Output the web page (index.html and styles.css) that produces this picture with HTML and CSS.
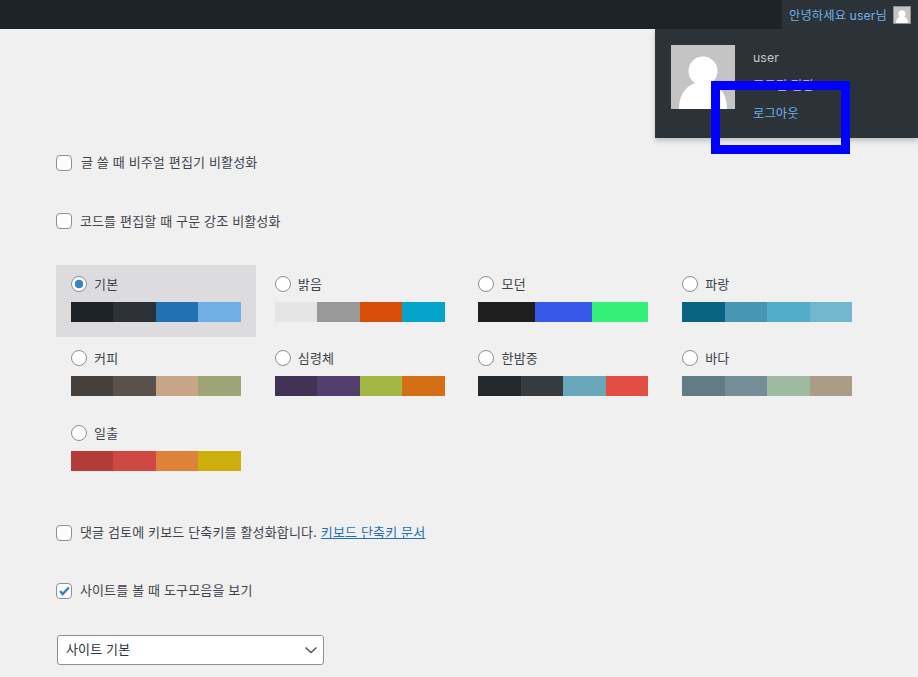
FILE: index.html
```html
<!DOCTYPE html>
<html lang="ko">
<head>
  <meta charset="UTF-8">
  <meta name="viewport" content="width=device-width, initial-scale=1.0">
  <title>프로필</title>
  <link rel="stylesheet" href="styles.css">
</head>
<body>
  <!-- Admin bar -->
  <div class="adminbar">
    <a href="#" class="account">
      <span>안녕하세요 user님</span>
      <svg class="avatar-small" viewBox="0 0 64 64"><rect width="64" height="64" fill="#c4c4c4"/><circle cx="32" cy="27" r="14.5" fill="#fff"/><path d="M8 64c0-17 10-27 24-27s24 10 24 27z" fill="#fff"/></svg>
    </a>
    <div class="account-menu">
      <svg class="avatar-large" viewBox="0 0 64 64"><rect width="64" height="64" fill="#c4c4c4"/><circle cx="32" cy="26" r="14.5" fill="#fff"/><path d="M8 64c0-17 10-27 24-27s24 10 24 27z" fill="#fff"/></svg>
      <div class="account-links">
        <a href="#">user</a>
        <a href="#">프로필 편집</a>
        <a href="#" class="logout">로그아웃</a>
      </div>
    </div>
    <div class="highlight"></div>
  </div>

  <!-- Profile form -->
  <div class="content">
    <label class="check-row first">
      <input type="checkbox">
      <span class="gap-wide">글 쓸 때 비주얼 편집기 비활성화</span>
    </label>
    <label class="check-row code-row">
      <input type="checkbox">
      <span>코드를 편집할 때 구문 강조 비활성화</span>
    </label>

    <div class="schemes">
      <div class="scheme selected">
        <label><input type="radio" name="scheme" checked>기본</label>
        <div class="swatches"><i style="background:#1d2327"></i><i style="background:#2c3338"></i><i style="background:#2271b1"></i><i style="background:#72aee6"></i></div>
      </div>
      <div class="scheme">
        <label><input type="radio" name="scheme">밝음</label>
        <div class="swatches"><i style="background:#e5e5e5"></i><i style="background:#999"></i><i style="background:#d64e07"></i><i style="background:#04a4cc"></i></div>
      </div>
      <div class="scheme">
        <label><input type="radio" name="scheme">모던</label>
        <div class="swatches"><i style="background:#1e1e1e"></i><i style="background:#3858e9"></i><i style="background:#33f078"></i></div>
      </div>
      <div class="scheme">
        <label><input type="radio" name="scheme">파랑</label>
        <div class="swatches"><i style="background:#096484"></i><i style="background:#4796b3"></i><i style="background:#52accc"></i><i style="background:#74b6ce"></i></div>
      </div>
      <div class="scheme">
        <label><input type="radio" name="scheme">커피</label>
        <div class="swatches"><i style="background:#46403c"></i><i style="background:#59524c"></i><i style="background:#c7a589"></i><i style="background:#9ea476"></i></div>
      </div>
      <div class="scheme">
        <label><input type="radio" name="scheme">심령체</label>
        <div class="swatches"><i style="background:#413256"></i><i style="background:#523f6d"></i><i style="background:#a3b745"></i><i style="background:#d46f15"></i></div>
      </div>
      <div class="scheme">
        <label><input type="radio" name="scheme">한밤중</label>
        <div class="swatches"><i style="background:#25282b"></i><i style="background:#363b3f"></i><i style="background:#69a8bb"></i><i style="background:#e14d43"></i></div>
      </div>
      <div class="scheme">
        <label><input type="radio" name="scheme">바다</label>
        <div class="swatches"><i style="background:#627c83"></i><i style="background:#738e96"></i><i style="background:#9ebaa0"></i><i style="background:#aa9d88"></i></div>
      </div>
      <div class="scheme">
        <label><input type="radio" name="scheme">일출</label>
        <div class="swatches"><i style="background:#b43c38"></i><i style="background:#cf4944"></i><i style="background:#dd823b"></i><i style="background:#ccaf0b"></i></div>
      </div>
    </div>

    <label class="check-row comment-row">
      <input type="checkbox">
      <span>댓글 검토에 키보드 단축키를 활성화합니다. <a href="#">키보드 단축키 문서</a></span>
    </label>
    <label class="check-row toolbar-row">
      <input type="checkbox" checked>
      <span>사이트를 볼 때 도구모음을 보기</span>
    </label>

    <div class="select-box">
      <span>사이트 기본</span>
      <svg viewBox="0 0 16 16"><path d="M2.5 5.5 8 10.5l5.5-5" fill="none" stroke="#50575e" stroke-width="1.6"/></svg>
    </div>
  </div>
</body>
</html>
```

FILE: styles.css
```css
body {
  margin: 0;
  height: 677px;
  overflow: hidden;
  background-color: #f0f0f1;
  color: #3c434a;
  font-family: Inter, "Noto Sans CJK KR", sans-serif;
  font-size: 13px;
  letter-spacing: 0.15px;
}

a {
  color: #2271b1;
}

/* Admin bar */
.adminbar {
  position: relative;
  display: flex;
  justify-content: flex-end;
  height: 29px;
  background-color: #1d2327;
  font-size: 12.3px;
  letter-spacing: 0.1px;
}

.account {
  display: flex;
  align-items: center;
  justify-content: space-between;
  width: 136px;
  box-sizing: border-box;
  padding: 0 7px;
  background-color: #2c3338;
  color: #72aee6;
  text-decoration: none;
  white-space: nowrap;
}

.avatar-small {
  width: 16px;
  height: 16px;
  border: 1px solid #8c8f94;
}

.account-menu {
  position: absolute;
  top: 29px;
  right: 0;
  display: flex;
  width: 263px;
  height: 109px;
  box-sizing: border-box;
  padding: 16px;
  background-color: #2c3338;
  box-shadow: 0 3px 5px rgba(0, 0, 0, 0.2);
}

.avatar-large {
  width: 64px;
  height: 64px;
}

.account-links {
  display: flex;
  flex-direction: column;
  margin-left: 18px;
}

.account-links a {
  flex: none;
  height: 28px;
  line-height: 26px;
  color: #c3c4c7;
  text-decoration: none;
}

.account-links .logout {
  color: #72aee6;
}

.highlight {
  position: absolute;
  top: 81px;
  left: 711px;
  width: 121px;
  height: 55px;
  border: 9px solid #0000ff;
}

/* Form */
.content {
  padding-left: 55.9px;
}

.check-row {
  display: flex;
  align-items: center;
  height: 20px;
  line-height: 20px;
}

.check-row span {
  position: relative;
  top: -1px;
}

.check-row input {
  appearance: none;
  width: 16px;
  height: 16px;
  margin: 0 8px 0 0;
  border: 1px solid #8c8f94;
  border-radius: 4px;
  background: #fff;
}

.check-row input:checked {
  background: #fff url("data:image/svg+xml,%3Csvg xmlns='http://www.w3.org/2000/svg' viewBox='0 0 16 16'%3E%3Cpath d='M3.5 8 6.5 11.5 13.5 4' fill='none' stroke='%233582c4' stroke-width='2.8'/%3E%3C/svg%3E") center no-repeat;
}

.first {
  margin-top: 124px;
}

.gap-wide {
  margin-left: 1px;
}

.code-row {
  margin-top: 38px;
}

.code-row span {
  top: 0;
}

.schemes {
  display: grid;
  grid-template-columns: repeat(4, 200px);
  column-gap: 3.72px;
  row-gap: 2.49px;
  margin-top: 34px;
}

.scheme {
  height: 72px;
  box-sizing: border-box;
  padding: 11px 15px 0;
}

.scheme.selected {
  background-color: #dcdcde;
}

.scheme label {
  display: flex;
  align-items: center;
  height: 16px;
  line-height: 16px;
}

.scheme input {
  appearance: none;
  width: 16px;
  height: 16px;
  margin: 0 7.2px 0 0;
  border: 1px solid #8c8f94;
  border-radius: 50%;
  background: #fff;
}

.scheme input:checked {
  background: radial-gradient(circle, #3582c4 4px, #fff 4.6px);
}

.swatches {
  display: flex;
  width: 170px;
  height: 20px;
  margin-top: 10px;
}

.swatches i {
  flex: 1;
}

.comment-row {
  margin-top: 37px;
}

.toolbar-row {
  margin-top: 38px;
}

.select-box {
  display: flex;
  align-items: center;
  justify-content: space-between;
  width: 267px;
  height: 30px;
  box-sizing: border-box;
  margin: 34px 0 0 1.1px;
  padding: 0 4px 0 8px;
  border: 1px solid #8c8f94;
  border-radius: 3px;
  background-color: #fff;
  color: #2c3338;
}

.select-box span {
  padding-bottom: 2px;
}

.select-box svg {
  width: 16px;
  height: 16px;
}
```
